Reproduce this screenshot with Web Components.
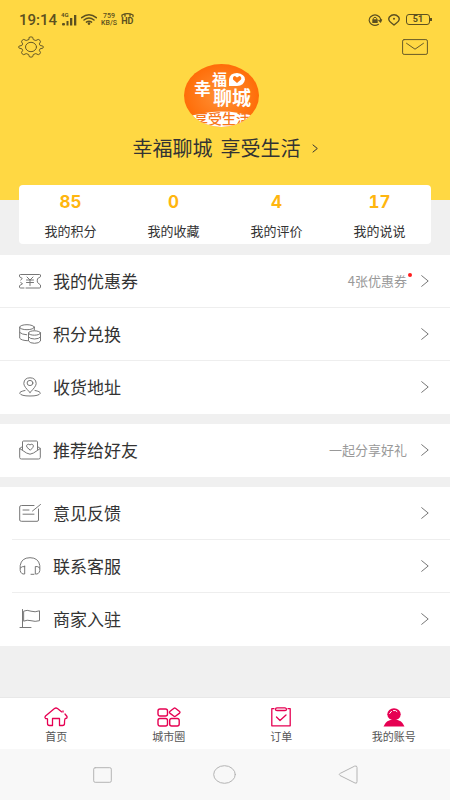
<!DOCTYPE html>
<html lang="zh-CN">
<head>
<meta charset="utf-8">
<meta name="viewport" content="width=device-width, initial-scale=1">
<title>我的账号</title>
<style>
  body { margin: 0; background: #f0f0f0; color: #333; font-family: "Noto Sans CJK SC", sans-serif; }
</style>
</head>
<body>
<account-page></account-page>
<script>
const ICONS = {
  gear: [26, 22, '<path d="M11.300 1.300Q13 .3 14.700 1.300L15.300 3.600L17.800 4.500L20.300 3.400Q22.400 4 22.500 5.800L21.300 7.900L22.200 9.500L24.800 10Q26 11 24.800 12.200L22.200 12.700L21.300 14.300L22.500 16.400Q22.200 18.300 20.300 18.700L17.800 17.600L15.300 18.500L14.700 20.700Q13 21.700 11.300 20.700L10.700 18.500L8.200 17.600L5.700 18.700Q3.700 18.200 3.500 16.400L4.700 14.300L3.800 12.700L1.200 12.200Q0 11 1.200 10L3.800 9.500L4.700 7.900L3.500 5.800Q3.700 4 5.700 3.400L8.200 4.500L10.700 3.600Z"/><ellipse cx="13" cy="11" rx="5.500" ry="4.700"/>'],
  mail: [26, 16, '<rect x=".6" y=".6" width="24.800" height="14.800" rx="1.500"/><path d="M4.500 4.300L13 10.200L21.500 4.300"/>'],
  signal: [16, 12, '<g fill="currentColor" stroke="none"><rect x="1" y="9" width="3" height="2.500" rx="1"/><rect x="5.500" y="7" width="2" height="4.500"/><rect x="9" y="4" width="2.300" height="7.500"/><rect x="13" y="1" width="2.300" height="10.500"/></g>'],
  wifi: [16, 11, '<g stroke-width="1.500"><path d="M.7 3.700Q8-2 15.300 3.700M3 6Q8 2.200 13 6M5.400 8.100Q8 6.200 10.600 8.100"/><circle cx="8" cy="9.600" r=".6" fill="currentColor"/></g>'],
  phone: [13, 4, '<path d="M1 3.500V2Q6.500-.7 12 2V3.500M4 3.200V1.500M9 3.200V1.500" stroke-width="1.300"/>'],
  lock: [14, 12, '<path d="M10.500 10.300Q7 12.500 3.500 10.300Q-.8 6.500 2.700 2.700Q7-1 11.300 2.700Q13 4.500 12.600 7.500M10.800 6.300L12.600 8L13.600 5.800" stroke-width="1.200"/><rect x="4.300" y="5.300" width="5.400" height="3.700" fill="currentColor" stroke="none"/><path d="M5.300 5.300V4.300Q7 2 8.700 4.300V5.300"/>'],
  location: [12, 12, '<path d="M6 11L3.500 9Q-.6 6 1.400 3Q3.500 .8 6 .8Q8.500 .8 10.600 3Q12.600 6 8.500 9Z" stroke-width="1.400"/><circle cx="6" cy="4.700" r="1" fill="currentColor" stroke="none"/>'],
  next: [8, 12, '<path d="M.7 .7L7.200 6L.7 11.300"/>'],
  ticket: [22, 18, '<path d="M5 16H1.500Q.5 16 .5 15V13.700L3.500 11.700L1.700 10.500M1.700 8L3.300 6.500L.5 4.700V3Q.5 2.500 1.500 2.500H20.500Q21.500 2.500 21.500 3V4.700L18.500 6.700Q18 9 18.500 10.500L21.500 13V15Q21.500 16 20.500 16H7"/><path d="M8 5L11 8L14 5M7.500 8H14.500M7.500 10.500H14.500M11 8V13.500"/>'],
  coins: [22, 20, '<ellipse cx="8" cy="3.200" rx="7.300" ry="2.500"/><path d="M.7 3.200V14.200Q2.500 16.500 8.500 16.700M.7 8.500Q3 10.500 7.700 10.800M15.300 3.200V6"/><ellipse cx="15.500" cy="9" rx="6" ry="2.200"/><path d="M9.500 9V17Q11 19.300 15.500 19.300T21.500 17V9M9.500 13Q11 15 15.500 15T21.500 13"/>'],
  place: [22, 20, '<path d="M11 15.500Q4.800 9.500 4.800 6.500Q5.200 .8 11 .8T17.200 6.500Q17.200 9.500 11 15.500Z"/><ellipse cx="11" cy="6" rx="2.900" ry="2.600"/><path d="M6 13.500Q.5 14.500 .7 16.300Q2 19 11 19T21.300 16.300Q21.500 14.500 16 13.500"/>'],
  invite: [22, 20, '<path d="M3.500 9.500V2Q3.500 1 4.500 1H17.500Q18.500 1 18.500 2V9.500M3.500 6.500L.7 8.500V17.500Q.7 19 2.500 19H19.500Q21.300 19 21.300 17.500V8.500L18.500 6.500M.7 8.500L7.500 13L11 14.200L14.500 13L21.300 8.500"/><path d="M11 10L8 7.300Q6.800 5.800 8.300 4.500Q10 3.700 11 5Q12 3.700 13.700 4.500Q15.200 5.800 14 7.300Z"/>'],
  feedback: [22, 18, '<path d="M15 1.500H2.500Q.7 1.500 .7 3V16Q.7 17.300 2.500 17.300H18Q19.500 17.300 19.500 16V5M13.500 7L21.500 .5M4 6H10M4 10.200H15"/>'],
  headset: [22, 18, '<path d="M5.700 9V17Q2 17.500 1.200 13.500V8.500Q2.500 .7 11 .7T20.800 8.500V13.500Q20 17.500 16.300 17V9.500Q19 9 20.800 11M5.700 9.500Q3 9 1.200 11M15 17.300H12"/>'],
  flag: [22, 20, '<path d="M3.500 .5V18M1 18.500H12M5 2Q8 .5 12 2.200Q16 3.500 20.500 1.800V11.700Q16 13 12 11.700Q8 10.500 5 12Z"/>'],
  home: [24, 20, '<path d="M19 5V4M21 7L23 9.500Q23.500 11.500 21.300 11.500Q20.500 12 20.500 16.500Q20.500 18.500 18.500 18.500H15.500V11.500H8.500V18.500H5.500Q3.500 18.500 3.500 16.500V12Q3.500 11.500 1.500 11.500Q.3 10.500 1.500 9L10.500 1.500Q12 .5 13.500 1.500L17.500 4.800" stroke-width="1.300"/>'],
  city: [24, 20, '<g stroke-width="1.400"><rect x="1" y="2" width="9.500" height="7" rx="2"/><path d="M17 1.300Q17.700 .8 18.400 1.300L22.600 4.500Q23.400 5.300 22.600 6.100L18.400 9.200Q17.700 9.700 17 9.200L12.800 6.100Q12 5.300 12.800 4.500Z"/><rect x="1" y="11.500" width="9.500" height="7.500" rx="2"/><rect x="12.700" y="11.500" width="9.500" height="7.500" rx="2"/></g>'],
  order: [20, 20, '<path d="M3 1.700H.8V18.800H19.200V1.700H17M6 .8H14Q15.500 1 15.500 2.200T14 3.500H6Q4.500 3.500 4.500 2.200T6 .8ZM5.500 10L9 13.500L15 8" stroke-width="1.300"/>'],
  user: [22, 20, '<g stroke="none" fill="currentColor"><ellipse cx="11" cy="7.300" rx="6.700" ry="6"/><path d="M.5 19.500Q3 12.500 11 12.500T21.500 19.500Z"/></g><path d="M6.700 6.500L8.500 4.300M10.500 3.500Q13 3 14 4.500" stroke="#fff"/>'],
  recent: [19, 16, '<rect x=".7" y=".7" width="17.600" height="14.600" rx="1.500"/>'],
  circle: [23, 19, '<ellipse cx="11.500" cy="9.500" rx="10.800" ry="8.800"/>'],
  back: [20, 19, '<path d="M17 1Q19 .3 19 2.500V16.500Q19 19 17 18L2 10.500Q0 9.500 2 8.500Z"/>']
};

class AppIcon extends HTMLElement {
  constructor() {
    super();
    const [w, h, body] = ICONS[this.getAttribute('name')];
    this.attachShadow({ mode: 'open' }).innerHTML = `
      <style>
        :host { display: block; flex: none; line-height: 0; }
        svg { display: block; overflow: visible; }
      </style>
      <svg width="${w}" height="${h}" viewBox="0 0 ${w} ${h}" fill="none" stroke="currentColor" stroke-linejoin="round" stroke-linecap="round" aria-hidden="true">${body}</svg>`;
  }
}

class StatusBar extends HTMLElement {
  constructor() {
    super();
    this.attachShadow({ mode: 'open' }).innerHTML = `
      <style>
        :host { display: flex; align-items: center; gap: 4px; height: 36px; padding: 3px 20px 0 19px; box-sizing: border-box; color: #5c5020; font-family: Roboto, sans-serif; }
        time { font-size: 15px; line-height: 18px; font-weight: 500; }
        .cell { position: relative; }
        .cell span { position: absolute; left: 0; top: -2px; font-size: 6px; line-height: 6px; font-weight: 700; }
        .speed { font-size: 7px; line-height: 7px; font-weight: 500; text-align: center; }
        .speed span { display: block; }
        .hd { display: grid; justify-items: center; font-size: 9px; line-height: 9px; font-weight: 700; }
        .right { display: flex; align-items: center; gap: 6px; margin-left: auto; }
        .battery { position: relative; width: 22px; height: 9px; border: 1px solid; border-radius: 3px; text-align: center; font-size: 9px; line-height: 9px; font-weight: 700; }
        .battery::after { content: ""; position: absolute; right: -3px; top: 3px; width: 2px; height: 3px; background: currentColor; }
      </style>
      <time>19:14</time>
      <div class="cell"><span>4G</span><app-icon name="signal"></app-icon></div>
      <app-icon name="wifi"></app-icon>
      <div class="speed"><span>759</span><span>KB/S</span></div>
      <div class="hd"><app-icon name="phone"></app-icon><span>HD</span></div>
      <div class="right">
        <app-icon name="lock"></app-icon>
        <app-icon name="location"></app-icon>
        <div class="battery">51</div>
      </div>`;
  }
}

class BrandLogo extends HTMLElement {
  constructor() {
    super();
    this.attachShadow({ mode: 'open' }).innerHTML = `
      <style>
        :host { display: block; }
        svg { display: block; }
        text { font-family: "Noto Sans CJK SC", sans-serif; font-weight: 700; }
        .strip { font-weight: 500; }
      </style>
      <svg width="75" height="63" viewBox="0 0 75 63">
        <defs>
          <radialGradient id="g"><stop offset="0" stop-color="#ff9238"/><stop offset="1" stop-color="#ff6d08"/></radialGradient>
          <clipPath id="c"><ellipse cx="37.500" cy="31.500" rx="37.500" ry="31.500"/></clipPath>
        </defs>
        <g clip-path="url(#c)">
          <rect width="75" height="63" fill="url(#g)"/>
          <path d="M0 54Q37.500 41 75 54V63H0Z" fill="#fff"/>
          <text class="strip" x="10" y="60" font-size="14" fill="#f7771c">享受生活</text>
        </g>
        <g fill="#fff">
          <text x="10" y="31" font-size="17">幸</text>
          <text x="28" y="21" font-size="15">福</text>
          <text x="29" y="41" font-size="19">聊城</text>
          <path d="M45 22V15Q46 9 53 9Q61 10 61 15.500Q60 21.500 53 22Z"/>
        </g>
        <path d="M53 19L49 15.500Q48.500 12 51 12L53 13.500L55.500 12Q58 13 57 15.500Z" fill="#ff7815"/>
      </svg>`;
  }
}

class ProfileHeader extends HTMLElement {
  constructor() {
    super();
    this.attachShadow({ mode: 'open' }).innerHTML = `
      <style>
        :host { display: block; background: #ffd843; padding-bottom: 38px; }
        .tools { display: flex; align-items: center; justify-content: space-between; height: 22px; padding: 0 22px 0 18px; }
        button { appearance: none; border: 0; padding: 0; margin: 0; background: none; font: inherit; color: #675a28; cursor: pointer; }
        .who { display: flex; flex-direction: column; align-items: center; gap: 7px; margin-top: 6px; }
        brand-logo { padding-right: 8px; }
        .name { display: flex; align-items: center; gap: 11px; font-size: 20px; line-height: 28px; color: #333; }
        .words { display: flex; gap: 8px; }
      </style>
      <status-bar></status-bar>
      <div class="tools">
        <button aria-label="设置"><app-icon name="gear"></app-icon></button>
        <button aria-label="消息"><app-icon name="mail"></app-icon></button>
      </div>
      <div class="who">
        <brand-logo></brand-logo>
        <button class="name"><span class="words"><span>幸福聊城</span><span>享受生活</span></span><svg width="6" height="9" viewBox="0 0 6 9" fill="none" stroke="currentColor" aria-hidden="true"><path d="M.7 .7L5.300 4.500L.7 8.300"/></svg></button>
      </div>`;
  }
}

class StatItem extends HTMLElement {
  constructor() {
    super();
    this.attachShadow({ mode: 'open' }).innerHTML = `
      <style>
        :host { display: block; }
        a { display: grid; justify-items: center; gap: 10px; color: #333; text-decoration: none; font-size: 13px; line-height: 18px; }
        b { font: 700 17px/20px Inter, sans-serif; font-variant-numeric: tabular-nums; color: #ffb60f; }
      </style>
      <a href="#"><b>${this.getAttribute('value')}</b><span><slot></slot></span></a>`;
  }
}

class StatCard extends HTMLElement {
  constructor() {
    super();
    this.attachShadow({ mode: 'open' }).innerHTML = `
      <style>
        :host { display: grid; grid-auto-flow: column; grid-auto-columns: 1fr; position: relative; margin: -15px 19px 11px; padding: 7px 0 4px; background: #fff; border-radius: 4px; }
      </style>
      <slot></slot>`;
  }
}

class MenuGroup extends HTMLElement {
  constructor() {
    super();
    this.attachShadow({ mode: 'open' }).innerHTML = `
      <style>
        :host { display: block; background: #fff; margin-bottom: 10px; }
        ::slotted(:last-child) { --line: transparent; }
      </style>
      <slot></slot>`;
  }
}

class MenuRow extends HTMLElement {
  constructor() {
    super();
    this.attachShadow({ mode: 'open' }).innerHTML = `
      <style>
        :host { display: block; padding-left: var(--inset, 0); }
        a { display: flex; align-items: center; height: 53px; box-sizing: border-box; border-bottom: 1px solid var(--line, #eee); padding: 0 21px 0 calc(19px - var(--inset, 0px)); color: #333; text-decoration: none; font-size: 17px; line-height: 24px; }
        .icon { color: #777; width: 22px; margin-right: 12px; }
        .note { position: relative; margin-left: auto; margin-right: 14px; color: #999; font-size: 13px; line-height: 18px; }
        .dot::after { content: ""; position: absolute; right: -5px; top: 1px; width: 4px; height: 4px; border-radius: 50%; background: #ff1e1e; }
        .next { color: #777; }
      </style>
      <a href="#">
        <app-icon class="icon" name="${this.getAttribute('icon')}"></app-icon>
        <span><slot></slot></span>
        <span class="note${this.hasAttribute('dot') ? ' dot' : ''}">${this.getAttribute('note') || ''}</span>
        <app-icon class="next" name="next"></app-icon>
      </a>`;
  }
}

class TabItem extends HTMLElement {
  constructor() {
    super();
    this.attachShadow({ mode: 'open' }).innerHTML = `
      <style>
        :host { display: block; }
        a { display: grid; justify-items: center; gap: 2px; color: #555; text-decoration: none; font-size: 11px; line-height: 14px; }
        app-icon { color: #e60052; }
      </style>
      <a href="#"><app-icon name="${this.getAttribute('icon')}"></app-icon><span><slot></slot></span></a>`;
  }
}

class TabBar extends HTMLElement {
  constructor() {
    super();
    this.attachShadow({ mode: 'open' }).innerHTML = `
      <style>
        :host { display: block; }
        nav { display: grid; grid-auto-flow: column; grid-auto-columns: 1fr; background: #fff; border-top: 1px solid #e8e8e8; padding: 9px 0 6px; }
      </style>
      <nav><slot></slot></nav>`;
  }
}

class SystemNav extends HTMLElement {
  constructor() {
    super();
    this.attachShadow({ mode: 'open' }).innerHTML = `
      <style>
        :host { display: grid; grid-template-columns: repeat(3, 1fr); align-items: center; justify-items: center; height: 51px; padding: 0 41px; background: #f8f8f8; }
        button { appearance: none; border: 0; padding: 0; background: none; color: #b4b4b4; cursor: pointer; }
      </style>
      <button aria-label="最近任务"><app-icon name="recent"></app-icon></button>
      <button aria-label="主屏幕"><app-icon name="circle"></app-icon></button>
      <button aria-label="返回"><app-icon name="back"></app-icon></button>`;
  }
}

class AccountPage extends HTMLElement {
  constructor() {
    super();
    this.attachShadow({ mode: 'open' }).innerHTML = `
      <style>
        :host { display: flex; flex-direction: column; min-height: 100vh; }
        main { flex: 1; }
        .inset { --inset: 12px; }
      </style>
      <main>
        <profile-header></profile-header>
        <stat-card>
          <stat-item value="85">我的积分</stat-item>
          <stat-item value="0">我的收藏</stat-item>
          <stat-item value="4">我的评价</stat-item>
          <stat-item value="17">我的说说</stat-item>
        </stat-card>
        <menu-group>
          <menu-row icon="ticket" note="4张优惠券" dot>我的优惠券</menu-row>
          <menu-row icon="coins">积分兑换</menu-row>
          <menu-row icon="place">收货地址</menu-row>
        </menu-group>
        <menu-group>
          <menu-row icon="invite" note="一起分享好礼">推荐给好友</menu-row>
        </menu-group>
        <menu-group class="inset">
          <menu-row icon="feedback">意见反馈</menu-row>
          <menu-row icon="headset">联系客服</menu-row>
          <menu-row icon="flag">商家入驻</menu-row>
        </menu-group>
      </main>
      <tab-bar>
        <tab-item icon="home">首页</tab-item>
        <tab-item icon="city">城市圈</tab-item>
        <tab-item icon="order">订单</tab-item>
        <tab-item icon="user">我的账号</tab-item>
      </tab-bar>
      <system-nav></system-nav>`;
  }
}

customElements.define('app-icon', AppIcon);
customElements.define('status-bar', StatusBar);
customElements.define('brand-logo', BrandLogo);
customElements.define('profile-header', ProfileHeader);
customElements.define('stat-item', StatItem);
customElements.define('stat-card', StatCard);
customElements.define('menu-group', MenuGroup);
customElements.define('menu-row', MenuRow);
customElements.define('tab-item', TabItem);
customElements.define('tab-bar', TabBar);
customElements.define('system-nav', SystemNav);
customElements.define('account-page', AccountPage);
</script>
</body>
</html>
